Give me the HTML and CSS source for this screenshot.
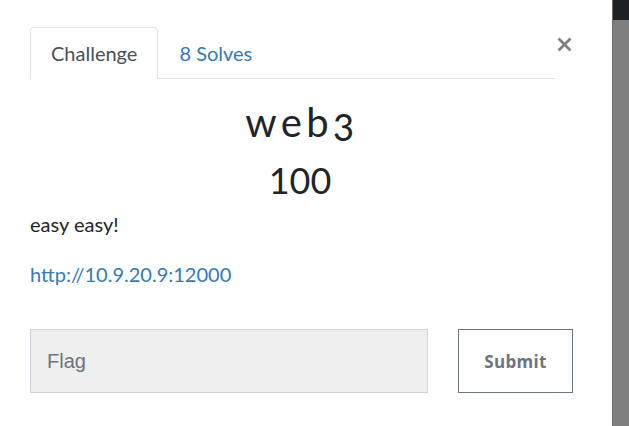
FILE: index.html
```html
<!DOCTYPE html>
<html>
<head>
<meta charset="utf-8">
<link rel="stylesheet" href="styles.css">
</head>
<body>
<div class="page">
  <div class="modal">
    <div class="top">
      <ul class="tabs">
        <li class="tab active">Challenge</li>
        <li class="tab"><a href="#">8 Solves</a></li>
      </ul>
      <button class="close" aria-label="Close">
        <svg width="15" height="15" viewBox="0 0 15 15"><path d="M1.5 1.5 L13.5 13.5 M13.5 1.5 L1.5 13.5" stroke="#808080" stroke-width="2.8" stroke-linecap="butt"/></svg>
      </button>
    </div>
    <h3 class="name">web3</h3>
    <h4 class="value">100</h4>
    <p class="desc">easy easy!</p>
    <p class="link"><a href="#">http://10.9.20.9:12000</a></p>
    <div class="submit-row">
      <input class="flag" type="text" placeholder="Flag">
      <button class="submit">Submit</button>
    </div>
  </div>
  <div class="strip"><div class="strip-top"></div></div>
</div>
</body>
</html>
```
FILE: styles.css
```css
html, body {
  margin: 0;
  padding: 0;
  background: #fff;
  height: 100%;
}
body {
  font-family: Lato, "Open Sans", sans-serif;
  color: #212529;
  overflow: hidden;
}
.page {
  display: flex;
  height: 426px;
}
.modal {
  flex: 1;
  padding: 27px 0 0 30px;
}
.top {
  display: flex;
  align-items: flex-start;
}
.tabs {
  list-style: none;
  margin: 0;
  padding: 0;
  display: flex;
  width: 525px;
  border-bottom: 1px solid #dee2e6;
  height: 51px;
}
.tab {
  font-size: 20px;
  line-height: 24px;
  padding: 13px 20px;
  border: 1px solid transparent;
  border-radius: 4px 4px 0 0;
  margin-bottom: -1px;
}
.tab.active {
  color: #495057;
  border-color: #dee2e6 #dee2e6 #fff;
  background: #fff;
}
.tab a {
  color: #337ab7;
  text-decoration: none;
}
.close {
  background: none;
  border: 0;
  padding: 0;
  margin: 10px 0 0 2px;
  width: 15px;
  height: 15px;
  display: block;
}
.close svg { display: block; }
.name {
  margin: 21px 0 0;
  width: 540px;
  padding-left: 4px;
  box-sizing: border-box;
  text-align: center;
  font-weight: 400;
  font-size: 40px;
  letter-spacing: 4.3px;
  line-height: 44px;
  color: #212529;
  font-feature-settings: "onum" 1;
}
.value {
  margin: 16px 0 0;
  width: 540px;
  text-align: center;
  font-weight: 400;
  font-size: 36px;
  line-height: 40px;
  color: #212529;
}
.desc {
  margin: 10px 0 0;
  font-size: 20px;
  line-height: 28px;
}
.link {
  margin: 22px 0 0;
  font-size: 20px;
  line-height: 28px;
}
.link a {
  color: #337ab7;
  text-decoration: none;
}
.submit-row {
  display: flex;
  margin: 41px 0 0;
  gap: 30px;
}
.flag {
  width: 398px;
  height: 64px;
  box-sizing: border-box;
  background: #efefef;
  border: 1px solid #ced4da;
  padding: 0 16px;
  font-family: "Liberation Sans", Arial, sans-serif;
  font-size: 20px;
  color: #495057;
  outline: none;
}
.flag::placeholder {
  color: #6c757d;
}
.submit {
  width: 115px;
  height: 64px;
  box-sizing: border-box;
  background: #fff;
  border: 1px solid #6c757d;
  border-radius: 0;
  font-family: "Open Sans", sans-serif;
  font-weight: 700;
  font-size: 17px;
  color: #6c757d;
  letter-spacing: 0.3px;
}
.strip {
  width: 16px;
  background: #7f7f7f;
  border-left: 1px solid #6a6a6a;
}
.strip-top {
  height: 20px;
  background: #1d2124;
}
```
